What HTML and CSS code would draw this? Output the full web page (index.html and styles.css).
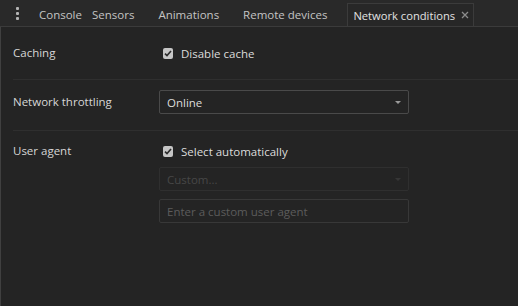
FILE: index.html
```html
<!DOCTYPE html>
<html lang="en">

<head>
    <meta charset="UTF-8">
    <meta name="viewport" content="width=device-width, initial-scale=1.0">
    <title>Network conditions</title>
    <link rel="stylesheet" href="styles.css">
</head>

<body>
    <header class="tabbar">
        <div class="menu-button">
            <span></span><span></span><span></span>
        </div>
        <div class="tab tab-console">Console</div>
        <div class="tab tab-sensors">Sensors</div>
        <div class="tab">Animations</div>
        <div class="tab">Remote devices</div>
        <div class="tab tab-active">
            Network conditions
            <svg class="tab-close" width="8" height="8" viewBox="0 0 8 8">
                <path d="M1 1 L7 7 M7 1 L1 7" stroke="#8c8c8c" stroke-width="1.3" />
            </svg>
        </div>
    </header>

    <main class="panel">
        <section class="row row-caching">
            <div class="row-label">Caching</div>
            <div class="row-controls">
                <label class="checkbox">
                    <span class="checkbox-box">
                        <svg width="8" height="7" viewBox="0 0 8 7">
                            <path d="M1 3.6 L3 5.6 L7 1" fill="none" stroke="#2b2b2b" stroke-width="1.6" />
                        </svg>
                    </span>
                    Disable cache
                </label>
            </div>
        </section>

        <section class="row row-throttling">
            <div class="row-label">Network throttling</div>
            <div class="row-controls">
                <div class="select">
                    <span>Online</span>
                    <span class="select-arrow"></span>
                </div>
            </div>
        </section>

        <section class="row row-agent">
            <div class="row-label">User agent</div>
            <div class="row-controls">
                <label class="checkbox">
                    <span class="checkbox-box">
                        <svg width="8" height="7" viewBox="0 0 8 7">
                            <path d="M1 3.6 L3 5.6 L7 1" fill="none" stroke="#2b2b2b" stroke-width="1.6" />
                        </svg>
                    </span>
                    Select automatically
                </label>
                <div class="select select-disabled">
                    <span>Custom...</span>
                    <span class="select-arrow"></span>
                </div>
                <div class="text-input">Enter a custom user agent</div>
            </div>
        </section>
    </main>
</body>

</html>
```

FILE: styles.css
```css
* {
    margin: 0;
    padding: 0;
    box-sizing: border-box;
}

body {
    width: 518px;
    height: 306px;
    overflow: hidden;
    background-color: #242424;
    font-family: "Open Sans", "Noto Sans", sans-serif;
    font-size: 11.5px;
    color: #d6d6d6;
    display: flex;
    flex-direction: column;
}

/* tab strip */

.tabbar {
    height: 27px;
    display: flex;
    align-items: flex-end;
    background-color: #292929;
    border-bottom: 1px solid #3b3b3b;
}

.menu-button {
    width: 27px;
    height: 26px;
    display: flex;
    flex-direction: column;
    align-items: center;
    justify-content: center;
    gap: 2px;
    padding-left: 7px;
}

.menu-button span {
    width: 3px;
    height: 3px;
    border-radius: 1px;
    background-color: #b4b4b4;
}

.tab {
    height: 23px;
    display: flex;
    align-items: center;
    padding: 0 12px;
    color: #c4c4c4;
    white-space: nowrap;
}

.tab-console {
    padding-right: 0;
}

.tab-sensors {
    padding-left: 10px;
}

.tab-active {
    margin-left: 8px;
    padding: 0 4px 0 5px;
    font-size: 11.2px;
    color: #e2e2e2;
    background-color: #272727;
    border: 1px solid #3b3b3b;
    border-bottom: none;
    gap: 6px;
}

/* settings */

.panel {
    flex: 1;
    border-left: 1px solid #404040;
    padding-left: 12px;
}

.row {
    display: flex;
    border-bottom: 1px solid #2f2f2f;
}

.row-caching {
    padding: 18px 0;
}

.row-throttling {
    padding: 10px 0 16px;
}

.row-agent {
    padding: 12px 0;
    border-bottom: none;
}

.row-label {
    width: 146px;
    line-height: 16px;
}

.row-throttling .row-label {
    line-height: 24px;
}

.row-controls {
    display: flex;
    flex-direction: column;
    width: 250px;
}

.checkbox {
    display: flex;
    align-items: center;
    gap: 8px;
    height: 16px;
    padding-left: 4px;
    color: #dcdcdc;
}

.checkbox-box {
    width: 10px;
    height: 11px;
    border-radius: 2px;
    background-color: #c6c6c6;
    display: flex;
    align-items: center;
    justify-content: center;
}

.select {
    height: 24px;
    display: flex;
    align-items: center;
    justify-content: space-between;
    padding: 0 7px;
    border: 1px solid #4a4a4a;
    border-radius: 2px;
    color: #dcdcdc;
}

.select-arrow {
    width: 0;
    height: 0;
    border-left: 3px solid transparent;
    border-right: 3px solid transparent;
    border-top: 3px solid #9a9a9a;
}

.select-disabled {
    margin-top: 8px;
    border-color: #2f2f2f;
    color: #474747;
}

.select-disabled .select-arrow {
    border-top-color: #363636;
}

.text-input {
    margin-top: 8px;
    height: 24px;
    display: flex;
    align-items: center;
    padding: 0 7px;
    border: 1px solid #383838;
    border-radius: 2px;
    color: #5c5c5c;
}
```
